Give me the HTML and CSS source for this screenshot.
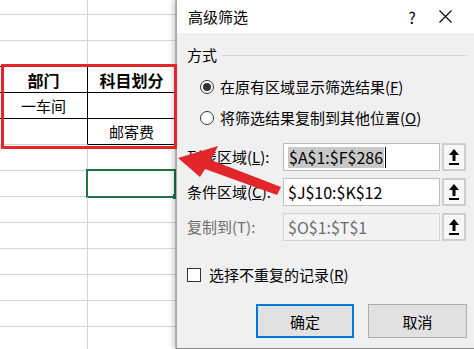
FILE: index.html
```html
<!DOCTYPE html>
<html lang="zh-CN">
<head>
    <meta charset="UTF-8">
    <meta name="viewport" content="width=device-width, initial-scale=1.0">
    <title>高级筛选</title>
    <link rel="stylesheet" href="styles.css">
</head>
<body>
    <div class="screen">
        <div class="sheet">
            <div class="row first"><div class="cell"></div><div class="cell"></div></div>
            <div class="row"><div class="cell"></div><div class="cell"></div></div>
            <div class="row rule"><div class="cell"></div><div class="cell"></div></div>
            <div class="row boxed"><div class="cell head">部门</div><div class="cell head">科目划分</div></div>
            <div class="row boxed"><div class="cell">一车间</div><div class="cell"></div></div>
            <div class="row"><div class="cell side"></div><div class="cell box">邮寄费</div></div>
            <div class="row"><div class="cell"></div><div class="cell"></div></div>
            <div class="row"><div class="cell"></div><div class="cell active"></div></div>
            <div class="row"><div class="cell"></div><div class="cell"></div></div>
            <div class="row"><div class="cell"></div><div class="cell"></div></div>
            <div class="row"><div class="cell"></div><div class="cell"></div></div>
            <div class="row"><div class="cell"></div><div class="cell"></div></div>
            <div class="row"><div class="cell"></div><div class="cell"></div></div>
            <div class="row"><div class="cell"></div><div class="cell"></div></div>
        </div>

        <div class="dialog">
            <div class="titlebar">
                <span class="title">高级筛选</span>
                <span class="help">?</span>
                <span class="close">
                    <svg width="13" height="13" viewBox="0 0 13 13"><path d="M0.5 0.5 L12.5 12.5 M12.5 0.5 L0.5 12.5" stroke="#000" stroke-width="1.1" fill="none"/></svg>
                </span>
            </div>
            <div class="body">
                <div class="group-head"><span>方式</span><span class="group-line"></span></div>
                <div class="radio-row"><span class="radio on"></span>在原有区域显示筛选结果(<u>F</u>)</div>
                <div class="radio-row"><span class="radio"></span>将筛选结果复制到其他位置(<u>O</u>)</div>

                <div class="fields">
                    <div class="field">
                        <span class="field-label">列表区域(<u>L</u>):</span>
                        <div class="range"><span class="picked">$A$1:$F$286</span><span class="caret"></span></div>
                        <span class="collapse"><svg width="10" height="17" viewBox="0 0 10 17"><path d="M5 0 L10 6 H6.5 V12 H3.5 V6 H0 Z" fill="#000"/><rect y="14" width="10" height="2" fill="#000"/></svg></span>
                    </div>
                    <div class="field">
                        <span class="field-label">条件区域(<u>C</u>):</span>
                        <div class="range">$J$10:$K$12</div>
                        <span class="collapse"><svg width="10" height="17" viewBox="0 0 10 17"><path d="M5 0 L10 6 H6.5 V12 H3.5 V6 H0 Z" fill="#000"/><rect y="14" width="10" height="2" fill="#000"/></svg></span>
                    </div>
                    <div class="field off">
                        <span class="field-label">复制到(T):</span>
                        <div class="range">$O$1:$T$1</div>
                        <span class="collapse"><svg width="10" height="17" viewBox="0 0 10 17"><path d="M5 0 L10 6 H6.5 V12 H3.5 V6 H0 Z" fill="#000"/><rect y="14" width="10" height="2" fill="#000"/></svg></span>
                    </div>
                </div>

                <div class="check-row"><span class="check"></span>选择不重复的记录(<u>R</u>)</div>

                <div class="actions">
                    <button class="btn primary">确定</button>
                    <button class="btn">取消</button>
                </div>
            </div>
        </div>

        <div class="mark"></div>
        <svg class="arrow" width="474" height="349" viewBox="0 0 474 349">
            <polygon points="178,158 218,146 211,160 281,187 277,195 205,169 200,177" fill="#e3262b"/>
        </svg>
    </div>
</body>
</html>
```

FILE: styles.css
```css
body {
    margin: 0;
    padding: 0;
    font-family: "Noto Sans CJK SC", "Noto Sans", sans-serif;
    background: #fff;
}

.screen {
    position: relative;
    width: 474px;
    height: 349px;
    overflow: hidden;
    display: flex;
}

/* spreadsheet behind the dialog */
.sheet {
    width: 176px;
    flex-shrink: 0;
}

.row {
    display: flex;
}

.cell {
    width: 88px;
    height: 26px;
    box-sizing: border-box;
    border-right: 1px solid #d4d4d4;
    border-bottom: 1px solid #d4d4d4;
    display: flex;
    align-items: center;
    justify-content: center;
    font-size: 15px;
    line-height: 20px;
    color: #000;
    position: relative;
}

.row.first .cell {
    height: 15px;
}

.row.rule .cell {
    border-bottom-color: #000;
}

.row.boxed .cell {
    border-right-color: #000;
    border-bottom-color: #000;
}

.cell.head {
    font-weight: bold;
    font-size: 16px;
}

.cell.side {
    border-right-color: #000;
}

.cell.box {
    border-right-color: #000;
    border-bottom-color: #000;
}

.cell.active::after {
    content: "";
    position: absolute;
    top: -2px;
    left: -2px;
    right: -1px;
    bottom: -2px;
    border: 2px solid #217346;
}

.cell.active::before {
    content: "";
    position: absolute;
    right: -3px;
    bottom: -3px;
    width: 5px;
    height: 5px;
    background: #217346;
    z-index: 1;
}

/* dialog */
.dialog {
    flex: 1;
    display: flex;
    flex-direction: column;
    background: #f0f0f0;
    border-left: 1px solid #a8a8a8;
    border-bottom: 1px solid #8a8a8a;
    box-shadow: -2px 0 6px rgba(0, 0, 0, 0.25);
    position: relative;
    z-index: 1;
    font-size: 15px;
    color: #000;
}

.titlebar {
    height: 33px;
    background: #fff;
    display: flex;
    align-items: center;
    padding-left: 11px;
}

.title {
    flex: 1;
    line-height: 20px;
}

.help {
    width: 20px;
    text-align: center;
    font-size: 16px;
    line-height: 20px;
}

.close {
    width: 46px;
    margin-right: 6px;
    display: flex;
    justify-content: center;
}

.body {
    flex: 1;
    padding: 12px 7px 0 10px;
}

.group-head {
    display: flex;
    align-items: center;
    height: 20px;
    line-height: 20px;
}

.group-line {
    flex: 1;
    height: 1px;
    background: #d5d5d5;
    margin-left: 5px;
}

.radio-row {
    display: flex;
    align-items: center;
    height: 31px;
    padding-left: 13px;
    line-height: 20px;
}

.group-head + .radio-row {
    margin-top: 6px;
}

.radio {
    width: 14px;
    height: 14px;
    box-sizing: border-box;
    border: 1px solid #333;
    border-radius: 50%;
    background: #fff;
    margin-right: 6px;
    display: flex;
    align-items: center;
    justify-content: center;
}

.radio.on::after {
    content: "";
    width: 8px;
    height: 8px;
    border-radius: 50%;
    background: #333;
}

.fields {
    margin-top: 10px;
    display: flex;
    flex-direction: column;
    gap: 7px;
}

.field {
    display: flex;
    align-items: center;
    height: 28px;
}

.field-label {
    width: 96px;
    line-height: 20px;
}

.range {
    width: 157px;
    height: 28px;
    box-sizing: border-box;
    border: 1px solid #bdbdbd;
    background: #fff;
    padding-left: 4px;
    display: flex;
    align-items: center;
    font-size: 16px;
    line-height: 21px;
}

.picked {
    background: #c8c8c8;
    padding: 0 1px;
}

.caret {
    width: 1px;
    height: 21px;
    background: #000;
    margin-left: 1px;
}

.collapse {
    width: 24px;
    height: 28px;
    box-sizing: border-box;
    margin-left: 2px;
    border: 2px solid #cdcdcd;
    background: #f7f7f7;
    display: flex;
    align-items: center;
    justify-content: center;
}

.field.off .field-label,
.field.off .range {
    color: #6d6d6d;
}

.field.off .range {
    background: #f3f3f3;
    border-color: #d3d3d3;
}

.check-row {
    display: flex;
    align-items: center;
    margin-top: 24px;
    height: 20px;
    line-height: 20px;
}

.check {
    width: 14px;
    height: 14px;
    box-sizing: border-box;
    border: 1px solid #333;
    background: #fff;
    margin-right: 8px;
}

.actions {
    display: flex;
    justify-content: flex-end;
    gap: 14px;
    margin-top: 19px;
}

.btn {
    width: 99px;
    height: 34px;
    box-sizing: border-box;
    border: 1px solid #adadad;
    background: #e1e1e1;
    font-family: inherit;
    font-size: 15px;
    color: #000;
    padding: 0;
}

.btn.primary {
    width: 98px;
    border: 2px solid #0078d7;
}

/* annotations drawn over the screenshot */
.mark {
    position: absolute;
    left: 1px;
    top: 64px;
    width: 176px;
    height: 85px;
    box-sizing: border-box;
    border: 3px solid #e3262b;
    z-index: 2;
}

.arrow {
    position: absolute;
    left: 0;
    top: 0;
    z-index: 3;
}
```
